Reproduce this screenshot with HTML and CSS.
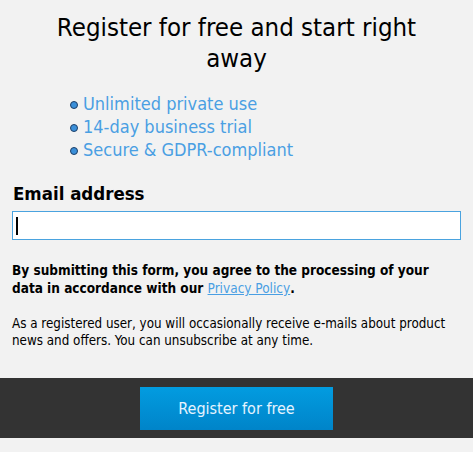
FILE: index.html
```html
<!DOCTYPE html>
<html lang="en">
<head>
<meta charset="utf-8">
<title>Register</title>
<link rel="stylesheet" href="styles.css">
</head>
<body>
<div class="page">
  <h1 class="title">Register for free and start right away</h1>
  <ul class="perks">
    <li>Unlimited private use</li>
    <li>14-day business trial</li>
    <li>Secure &amp; GDPR-compliant</li>
  </ul>
  <form class="form">
    <label class="label" for="email">Email address</label>
    <div class="input"><span class="caret"></span></div>
    <p class="consent">By submitting this form, you agree to the processing of your data in accordance with our <a href="#">Privacy Policy</a>.</p>
    <p class="note">As a registered user, you will occasionally receive e-mails about product news and offers. You can unsubscribe at any time.</p>
  </form>
</div>
<div class="footer">
  <button class="btn" type="button">Register for free</button>
</div>
</body>
</html>
```
FILE: styles.css
```css
html, body {
  margin: 0;
  padding: 0;
  background: #f2f2f2;
}
body {
  font-family: "DejaVu Sans Condensed", "DejaVu Sans", sans-serif;
  color: #000;
}
.page {
  padding: 12px 12px 0 12px;
}
.title {
  margin: 0 auto;
  width: 380px;
  text-align: center;
  font-weight: normal;
  font-size: 25.6px;
  line-height: 31px;
}
.perks {
  list-style: none;
  margin: 18px 0 0 0;
  padding: 0 0 0 58px;
  color: #4a9fe3;
  font-size: 18px;
  line-height: 23px;
}
.perks li {
  display: flex;
  align-items: center;
  gap: 5px;
}
.perks li::before {
  content: "";
  width: 6px;
  height: 6px;
  border-radius: 50%;
  background: #3a8fd9;
  border: 1px solid #1d3e66;
  margin-top: 3px;
}
.form {
  margin-top: 22px;
}
.label {
  display: block;
  font-weight: bold;
  font-size: 18.5px;
  line-height: 22px;
  padding-left: 1px;
}
.input {
  margin-top: 6px;
  height: 27px;
  background: #fff;
  border: 1px solid #4aa3df;
  display: flex;
  align-items: center;
  padding-left: 3px;
}
.caret {
  width: 2px;
  height: 18px;
  background: #000;
}
.consent {
  margin: 21px 0 0 0;
  font-weight: bold;
  font-size: 13.5px;
  line-height: 18px;
}
.consent a {
  color: #4a9fe3;
  font-weight: normal;
  text-decoration: underline;
}
.note {
  margin: 18px 0 0 0;
  font-size: 13.3px;
  line-height: 17px;
}
.footer {
  margin-top: 29px;
  background: #333;
  height: 60px;
  display: flex;
  align-items: center;
  justify-content: center;
}
.btn {
  width: 193px;
  height: 43px;
  border: 0;
  background: linear-gradient(#029ce0, #0084c9);
  color: #e6f4ff;
  font-family: inherit;
  font-size: 16px;
  cursor: pointer;
}
```
